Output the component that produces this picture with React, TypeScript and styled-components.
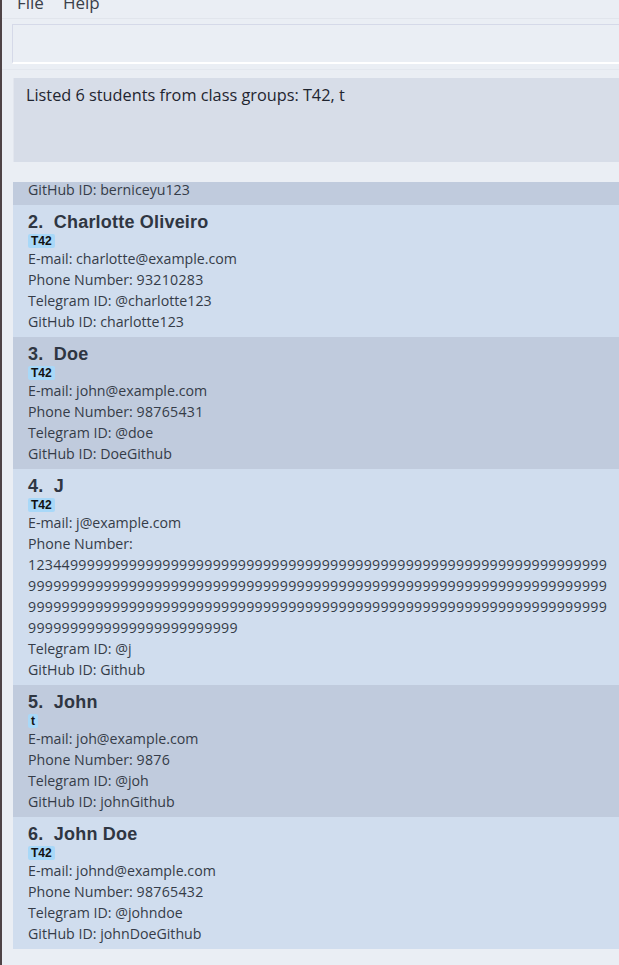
import React from "react";
import styled, { createGlobalStyle } from "styled-components";

const Global = createGlobalStyle`
  html, body { margin: 0; padding: 0; overflow: hidden; background: #eaeef4; }
  body { font-family: "Open Sans", "Noto Sans", sans-serif; }
`;

const Window = styled.div`
  width: 640px;
  height: 965px;
  background: #eaeef4;
  border-left: 2px solid #4e4346;
  box-sizing: border-box;
  display: flex;
  flex-direction: column;
  overflow: hidden;
`;

const MenuBar = styled.div`
  display: flex;
  gap: 19px;
  height: 31px;
  box-sizing: border-box;
  margin-top: -12px;
  padding: 0 0 2px 15px;
  align-items: center;
  font-size: 17px;
  color: #3a3f4a;
  border-bottom: 1px solid #e1e5ec;
  flex: none;
`;

const CommandBox = styled.div`
  margin: 5px 0 0 10px;
  height: 37px;
  background: #eaeef4;
  border: 1px solid #d5d9e8;
  border-bottom: 2px solid #ffffff;
  border-right: none;
  flex: none;
`;

const Divider = styled.div`
  height: 1px;
  background: #e3e7ee;
  margin-top: 5px;
  flex: none;
`;

const ResultBox = styled.div`
  margin: 8px 0 0 11px;
  height: 84px;
  background: #d7dde8;
  border-left: 1px solid #e2e6ee;
  padding: 6px 12px;
  box-sizing: border-box;
  font-size: 16.3px;
  color: #1f2530;
  flex: none;
`;

const ListViewport = styled.div`
  margin: 20px 13px 0 11px;
  height: 768px;
  overflow: hidden;
  flex: none;
`;

const ListInner = styled.div`
  margin-top: -109px;
  display: flex;
  flex-direction: column;
`;

const Card = styled.div<{ $alt: boolean }>`
  background: ${(p) => (p.$alt ? "#c0cbdd" : "#d0ddee")};
  padding: 6px 15px 5px 15px;
  color: #353c48;
`;

const Name = styled.div`
  font-family: "Liberation Sans", Arial, sans-serif;
  font-weight: bold;
  font-size: 18px;
  letter-spacing: 0.2px;
  color: #2f3642;
  line-height: 22px;
  white-space: pre;
`;

const Tags = styled.div`
  display: flex;
  gap: 4px;
  margin: 1px 0 0;
`;

const Tag = styled.span`
  font-family: "Liberation Sans", Arial, sans-serif;
  font-weight: bold;
  font-size: 12px;
  line-height: 14px;
  padding: 0 3px;
  background: #a8d8f8;
  border-radius: 2px;
  color: #111;
`;

const Line = styled.div`
  font-size: 14.2px;
  line-height: 21px;
  overflow-wrap: anywhere;
`;

const Digits = styled.span`
  letter-spacing: 0.28px;
`;

type Person = {
  name: string;
  tag: string;
  email: string;
  phone: string;
  telegram: string;
  github: string;
};

const longPhone = "12344" + "9".repeat(227);

const people: Person[] = [
  { name: "Bernice Yu", tag: "T42", email: "berniceyu@example.com", phone: "99272758", telegram: "@berniceyu123", github: "berniceyu123" },
  { name: "Charlotte Oliveiro", tag: "T42", email: "charlotte@example.com", phone: "93210283", telegram: "@charlotte123", github: "charlotte123" },
  { name: "Doe", tag: "T42", email: "john@example.com", phone: "98765431", telegram: "@doe", github: "DoeGithub" },
  { name: "J", tag: "T42", email: "j@example.com", phone: longPhone, telegram: "@j", github: "Github" },
  { name: "John", tag: "t", email: "joh@example.com", phone: "9876", telegram: "@joh", github: "johnGithub" },
  { name: "John Doe", tag: "T42", email: "johnd@example.com", phone: "98765432", telegram: "@johndoe", github: "johnDoeGithub" },
];

export default function App() {
  return (
    <>
      <Global />
      <Window>
        <MenuBar>
          <span>File</span>
          <span>Help</span>
        </MenuBar>
        <CommandBox />
        <Divider />
        <ResultBox>Listed 6 students from class groups: T42, t</ResultBox>
        <ListViewport>
          <ListInner>
            {people.map((p, i) => (
              <Card key={p.name} $alt={i % 2 === 0}>
                <Name>{`${i + 1}.  ${p.name}`}</Name>
                <Tags>
                  <Tag>{p.tag}</Tag>
                </Tags>
                <Line>E-mail: {p.email}</Line>
                <Line>
                  Phone Number: <Digits>{p.phone}</Digits>
                </Line>
                <Line>Telegram ID: {p.telegram}</Line>
                <Line>GitHub ID: {p.github}</Line>
              </Card>
            ))}
          </ListInner>
        </ListViewport>
      </Window>
    </>
  );
}
